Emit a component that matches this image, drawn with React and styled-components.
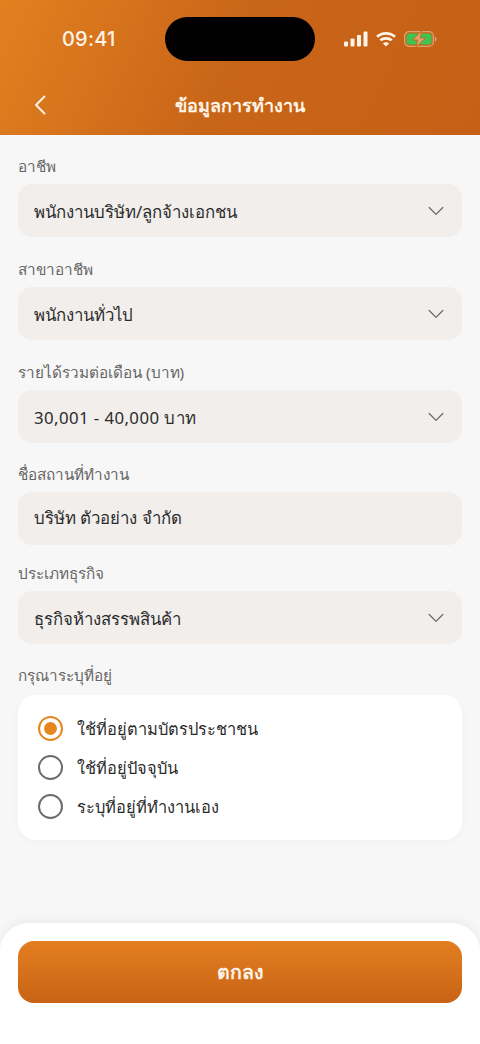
import React from 'react';
import styled, { createGlobalStyle } from 'styled-components';

const GlobalStyle = createGlobalStyle`
  * { box-sizing: border-box; }
  html, body { margin: 0; padding: 0; background: #f7f7f7; }
  body { font-family: "Noto Sans", "Liberation Sans", "Noto Sans CJK SC", sans-serif; }
`;

const Page = styled.div`
  width: 480px;
  height: 1044px;
  display: flex;
  flex-direction: column;
  overflow: hidden;
  background: #f7f7f7;
`;

const Header = styled.header`
  height: 135px;
  flex: none;
  background: linear-gradient(115deg, #e28020 0%, #c96518 48%, #c56016 100%);
  color: #fff;
`;

const StatusBar = styled.div`
  height: 78px;
  padding-top: 17px;
  display: grid;
  grid-template-columns: 165px 150px 165px;
`;

const Time = styled.div`
  height: 44px;
  padding-left: 62px;
  display: flex;
  align-items: center;
  font-family: Inter, "Liberation Sans", sans-serif;
  font-size: 20px;
  font-weight: 500;
  letter-spacing: 0.2px;
  color: #fdf3e6;
`;

const Island = styled.div`
  width: 150px;
  height: 44px;
  border-radius: 22px;
  background: #000;
`;

const StatusIcons = styled.div`
  height: 44px;
  padding-left: 29px;
  display: flex;
  align-items: center;
  gap: 8px;
`;

const NavRow = styled.div`
  height: 54px;
  padding: 0 34px;
  display: grid;
  grid-template-columns: 60px 1fr 60px;
  align-items: center;
`;

const BackButton = styled.button`
  width: 14px;
  height: 22px;
  padding: 0;
  border: 0;
  background: none;
  color: #fdf3e6;
  display: flex;
`;

const Title = styled.h1`
  margin: 0;
  text-align: center;
  font-size: 18px;
  font-weight: 700;
  color: #fdf3e6;
`;

const Form = styled.main`
  flex: 1;
  padding: 20px 18px 0;
  display: flex;
  flex-direction: column;
`;

const Group = styled.section`
  margin-top: ${(p) => p.$top || 0}px;
`;

const Label = styled.div`
  height: 22px;
  margin-bottom: ${(p) => p.$gap || 7}px;
  display: flex;
  align-items: center;
  font-size: 15.3px;
  color: #666;
`;

const Field = styled.div`
  height: 53px;
  padding: 0 16px;
  display: flex;
  align-items: center;
  justify-content: space-between;
  border-radius: 14px;
  background: #f1eeeb;
  font-size: 16.8px;
  color: #2b2b2b;
`;

const Value = styled.span`
  padding: ${(p) => (p.$select ? '2px 0 0' : '0 0 2px')};
  letter-spacing: ${(p) => p.$spacing || 0}px;
`;

const Chevron = styled.svg`
  width: 16px;
  height: 10px;
  margin-right: 2px;
  flex: none;
  color: #666;
`;

const RadioCard = styled.div`
  height: 145px;
  padding: 14px 20px;
  display: flex;
  flex-direction: column;
  justify-content: space-between;
  border-radius: 18px;
  background: #fff;
  box-shadow: 0 2px 8px rgba(0, 0, 0, 0.03);
`;

const RadioRow = styled.label`
  height: 39px;
  display: flex;
  align-items: center;
  gap: 14px;
  font-size: 16.4px;
  color: #2b2b2b;
`;

const RadioMark = styled.span`
  width: 25px;
  height: 25px;
  flex: none;
  display: flex;
  align-items: center;
  justify-content: center;
  border-radius: 50%;
  border: 2.5px solid ${(p) => (p.$checked ? '#e5861f' : '#6c6c6c')};

  &::after {
    content: "";
    width: 13px;
    height: 13px;
    border-radius: 50%;
    background: ${(p) => (p.$checked ? '#e5861f' : 'transparent')};
  }
`;

const Sheet = styled.footer`
  height: 121px;
  flex: none;
  padding: 18px 18px 0;
  border-radius: 28px 28px 0 0;
  background: #fff;
  box-shadow: 0 -3px 10px rgba(0, 0, 0, 0.05);
`;

const Submit = styled.button`
  width: 100%;
  height: 62px;
  border: 0;
  border-radius: 16px;
  background: linear-gradient(180deg, #e37f20 0%, #c86316 100%);
  color: #fdf3e6;
  font-family: inherit;
  font-size: 19.5px;
  font-weight: 700;
`;

const SignalIcon = () => (
  <svg width="24" height="16" viewBox="0 0 24 16" fill="#fdf3e6">
    <rect x="0" y="10.5" width="4" height="5" rx="1" />
    <rect x="6.5" y="7.5" width="4" height="8" rx="1" />
    <rect x="13" y="4" width="4" height="11.5" rx="1" />
    <rect x="19.5" y="0.5" width="4" height="15" rx="1" />
  </svg>
);

const WifiIcon = () => (
  <svg width="20" height="16" viewBox="0 0 20 16" fill="none" stroke="#fdf3e6" strokeWidth="2.8">
    <path d="M1 5.8C6 1.2 14 1.2 19 5.8" />
    <path d="M4.3 9.3C7.5 6.6 12.5 6.6 15.7 9.3" />
    <path d="M10 15.4 6.8 12.2C8.6 10.8 11.4 10.8 13.2 12.2Z" fill="#fdf3e6" stroke="none" />
  </svg>
);

const BatteryIcon = () => (
  <svg width="33" height="18" viewBox="0 0 33 18">
    <rect x="0.7" y="1.7" width="28.6" height="14.6" rx="4.4" fill="none" stroke="#e0a270" strokeWidth="1.3" />
    <rect x="2.5" y="3.5" width="25" height="11" rx="2.8" fill="#3cc454" />
    <path d="M30.8 6.5c1.2.4 1.8 1.3 1.8 2.5s-.6 2.1-1.8 2.5z" fill="#e0a270" />
    <path d="M18 0.5 8.5 10h5.2L11.8 17.5 21.5 8h-5.3z" fill="#e0a270" stroke="#c96518" strokeWidth="0.9" />
  </svg>
);

const ChevronDown = () => (
  <Chevron viewBox="0 0 16 10" fill="none" stroke="currentColor" strokeWidth="1.2" strokeLinecap="round" strokeLinejoin="round">
    <path d="M1.2 1.5 8 8.3l6.8-6.8" />
  </Chevron>
);

const radios = [
  { text: 'ใช้ที่อยู่ตามบัตรประชาชน', checked: true },
  { text: 'ใช้ที่อยู่ปัจจุบัน' },
  { text: 'ระบุที่อยู่ที่ทำงานเอง' },
];

const fields = [
  { label: 'อาชีพ', value: 'พนักงานบริษัท/ลูกจ้างเอกชน', select: true, top: 0 },
  { label: 'สาขาอาชีพ', value: 'พนักงานทั่วไป', select: true, top: 21 },
  { label: 'รายได้รวมต่อเดือน (บาท)', value: '30,001 - 40,000 บาท', select: true, top: 21, spacing: 0.42 },
  { label: 'ชื่อสถานที่ทำงาน', value: 'บริษัท ตัวอย่าง จำกัด', top: 20 },
  { label: 'ประเภทธุรกิจ', value: 'ธุรกิจห้างสรรพสินค้า', select: true, top: 17 },
];

export default function App() {
  return (
    <Page>
      <GlobalStyle />
      <Header>
        <StatusBar>
          <Time>09:41</Time>
          <Island />
          <StatusIcons>
            <SignalIcon />
            <WifiIcon />
            <BatteryIcon />
          </StatusIcons>
        </StatusBar>
        <NavRow>
          <BackButton aria-label="back">
            <svg width="14" height="22" viewBox="0 0 14 22" fill="none" stroke="currentColor" strokeWidth="2" strokeLinecap="round" strokeLinejoin="round">
              <path d="M10.5 2.5 2 11l8.5 8.5" />
            </svg>
          </BackButton>
          <Title>ข้อมูลการทำงาน</Title>
        </NavRow>
      </Header>
      <Form>
        {fields.map((f) => (
          <Group key={f.label} $top={f.top}>
            <Label>{f.label}</Label>
            <Field>
              <Value $select={f.select} $spacing={f.spacing}>{f.value}</Value>
              {f.select && <ChevronDown />}
            </Field>
          </Group>
        ))}
        <Group $top={20}>
          <Label $gap={9}>กรุณาระบุที่อยู่</Label>
          <RadioCard>
            {radios.map((r) => (
              <RadioRow key={r.text}>
                <RadioMark $checked={r.checked} />
                {r.text}
              </RadioRow>
            ))}
          </RadioCard>
        </Group>
      </Form>
      <Sheet>
        <Submit>ตกลง</Submit>
      </Sheet>
    </Page>
  );
}
